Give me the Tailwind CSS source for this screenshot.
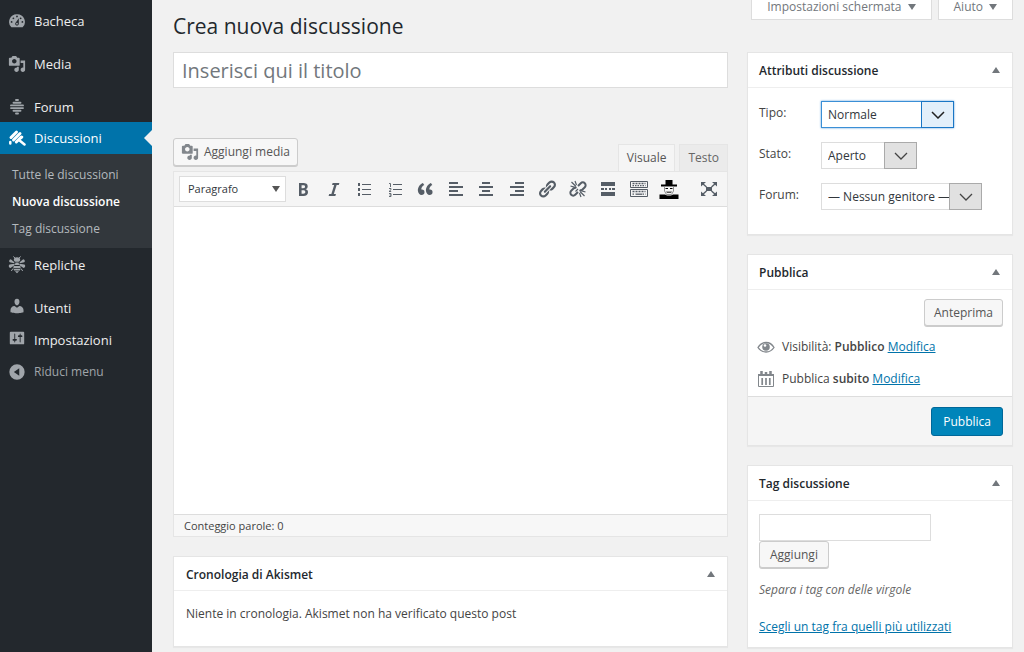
<!DOCTYPE html>
<html lang="it">
<head>
<meta charset="utf-8">
<title>Crea nuova discussione</title>
<script src="https://cdn.jsdelivr.net/npm/@tailwindcss/browser@4"></script>
</head>
<body class="flex min-h-screen bg-[#f1f1f1] font-['Open_Sans','Noto_Sans',sans-serif] text-[12px] leading-5 text-[#444]">

<nav class="w-[152px] shrink-0 bg-[#23282d] pt-[5px] text-[13px] text-[#eee]" aria-label="Menu principale">
  <a href="#" class="flex h-8 items-center gap-2 pl-2">
    <svg class="size-[18px] shrink-0 fill-[#a0a5aa]" viewBox="0 0 20 20"><path fill-rule="evenodd" d="M3.76 17h12.48A8.500 8.500 0 0 0 10 2.500 8.500 8.500 0 0 0 3.760 17zM10 4c.55 0 1 .45 1 1s-.45 1-1 1-1-.45-1-1 .45-1 1-1zM6 6c.55 0 1 .45 1 1s-.45 1-1 1-1-.45-1-1 .45-1 1-1zm8 0c.55 0 1 .45 1 1s-.45 1-1 1-1-.45-1-1 .45-1 1-1zm-5.370 5.550L12 7v6c0 1.100-.9 2-2 2s-2-.9-2-2c0-.57.24-1.080.63-1.450zM4 10c.55 0 1 .45 1 1s-.45 1-1 1-1-.45-1-1 .45-1 1-1zm12 0c.55 0 1 .45 1 1s-.45 1-1 1-1-.45-1-1 .45-1 1-1zm-5 3c0-.55-.45-1-1-1s-1 .45-1 1 .45 1 1 1 1-.45 1-1z"/></svg>
    Bacheca</a>
  <a href="#" class="mt-[11px] flex h-8 items-center gap-2 pl-2">
    <svg class="size-[18px] shrink-0 fill-[#a0a5aa]" viewBox="0 0 20 20"><path id="media" fill-rule="evenodd" d="M13 11V4c0-.55-.45-1-1-1h-1.670L9 1H5L3.670 3H2c-.55 0-1 .45-1 1v7c0 .55.45 1 1 1h10c.55 0 1-.45 1-1zM7 4.500c1.380 0 2.500 1.120 2.500 2.500S8.380 9.500 7 9.500 4.500 8.380 4.500 7 5.620 4.500 7 4.500zM14 6h5v10.500c0 1.380-1.120 2.500-2.500 2.500S14 17.880 14 16.500s1.120-2.500 2.500-2.500c.17 0 .34.02.5.05V9h-3V6zm-4 8.050V13h2v3.500c0 1.380-1.120 2.500-2.500 2.500S7 17.880 7 16.500 8.120 14 9.500 14c.17 0 .34.02.5.05z"/></svg>
    Media</a>
  <a href="#" class="mt-[11px] flex h-8 items-center gap-2 pl-2">
    <svg class="size-[18px] shrink-0 stroke-[#a0a5aa]" viewBox="0 0 18 18" fill="none" stroke-width="1.900" stroke-linecap="round"><path d="M8 2h2M5.500 4.700h7M3 7.400h12M3 10.100h12M5.500 12.800h7M8 15.500h2"/></svg>
    Forum</a>
  <a href="#" class="relative -mt-px flex h-8 items-center gap-2 bg-[#0073aa] pl-2 text-white">
    <svg class="size-[18px] shrink-0" viewBox="0 0 18 18" fill="none" stroke="#fff" stroke-linecap="round"><path stroke-width="3" d="M3 8.500L8.500 3M5.500 11l6.500-6.500M8.300 13l5-5"/><path stroke-width="2.500" d="M11 11l5.500 4.500M2.300 13v1.500M13 9l1-1"/></svg>
    Discussioni
    <span class="absolute right-0 top-2 border-y-8 border-r-8 border-y-transparent border-r-[#f1f1f1]"></span></a>
  <div class="flex flex-col bg-[#32373c] pb-[6px] pl-3 pt-[7px] text-[12px] leading-[27px] text-[#b4b9be]">
    <a href="#">Tutte le discussioni</a>
    <a href="#" class="font-semibold text-white">Nuova discussione</a>
    <a href="#">Tag discussione</a>
  </div>
  <a href="#" class="mt-px flex h-8 items-center gap-2 pl-2">
    <svg class="size-[18px] shrink-0 fill-[#a0a5aa]" viewBox="0 0 18 18"><path d="M5.800 3.600C6 2 7.200 1.300 9 1.300s3 .7 3.200 2.300c0 1.200-.8 1.900-1.500 2.200H7.300c-.7-.3-1.500-1-1.500-2.200zM6.400 6.200L2.800 3.200C.9 3.300.8 5.800 1.800 6.300l4.300 1zM11.600 6.200l3.600-3c1.900.1 2 2.600 1 3.100l-4.300 1zM6.800 7.700L1.500 8.600C.2 9.500.8 12 2.500 12l4-2.800zM11.200 7.700l5.300.9c1.300.9.7 3.400-1 3.400l-4-2.800zM7.500 6.500h3l.7 2.600H6.800zM5.700 10h6.600l.4 1.900H5.300zM5.400 12.800h7.200l-.7 1.700H6.100zM6.900 15.300h4.200L9 17.300z"/><path d="M7 2L5.300.5M11 2L12.700.5M5 12.500L3.300 15M13 12.500l1.700 2.500" stroke="#a0a5aa"/></svg>
    Repliche</a>
  <a href="#" class="mt-[11px] flex h-8 items-center gap-2 pl-2">
    <svg class="mb-1 size-[18px] shrink-0 fill-[#a0a5aa]" viewBox="0 0 20 20"><path d="M10 9.250c-2.270 0-2.730-3.440-2.730-3.440C7 4.020 7.820 2 9.970 2c2.160 0 2.980 2.020 2.710 3.810 0 0-.41 3.440-2.680 3.440zm0 2.570L12.720 10c2.390 0 4.520 2.330 4.520 4.530v2.490s-3.650 1.130-7.240 1.130c-3.650 0-7.240-1.130-7.240-1.130v-2.490c0-2.250 1.940-4.480 4.470-4.480z"/></svg>
    Utenti</a>
  <a href="#" class="flex h-8 items-center gap-2 pl-2">
    <svg class="mb-1 size-[18px] shrink-0 fill-[#a0a5aa]" viewBox="0 0 20 20"><path fill-rule="evenodd" d="M18 16V4c0-.55-.45-1-1-1H3c-.55 0-1 .45-1 1v12c0 .55.45 1 1 1h14c.55 0 1-.45 1-1zM8 11h1c.55 0 1 .45 1 1s-.45 1-1 1H8v1.500c0 .28-.22.5-.5.5s-.5-.22-.5-.5V13H6c-.55 0-1-.45-1-1s.45-1 1-1h1V5.500c0-.28.22-.5.5-.5s.5.22.5.5V11zm5-2h-1c-.55 0-1-.45-1-1s.45-1 1-1h1V5.500c0-.28.22-.5.5-.5s.5.22.5.5V7h1c.55 0 1 .45 1 1s-.45 1-1 1h-1v5.500c0 .28-.22.5-.5.5s-.5-.22-.5-.5V9z"/></svg>
    Impostazioni</a>
  <button type="button" class="flex h-8 w-full items-center gap-2 pl-2 text-[12px] text-[#a0a5aa]">
    <svg class="size-[18px] shrink-0 fill-[#a0a5aa]" viewBox="0 0 20 20"><path fill-rule="evenodd" d="M10 1.500a8.500 8.500 0 1 0 0 17 8.500 8.500 0 0 0 0-17zM12.500 5.800v8.400L6.500 10z"/></svg>
    Riduci menu</button>
</nav>

<div class="flex min-w-0 flex-1 gap-[19px] pl-[21px] pr-[11px]">
  <main class="flex min-w-0 flex-1 flex-col pt-[10px]">
    <h1 class="text-[21px] leading-8 text-[#23282d]">Crea nuova discussione</h1>
    <input type="text" aria-label="Titolo" placeholder="Inserisci qui il titolo" class="mt-[10px] h-9 w-full border border-[#ddd] bg-white px-2 pt-px text-[20px] placeholder:text-[#72777c]">

    <div class="mt-[50px] flex items-start justify-between">
      <button type="button" class="flex h-7 items-center gap-1 rounded-[3px] border border-[#ccc] bg-[#f7f7f7] px-[7px] text-[#555] shadow-[0_1px_0_#ccc]">
        <svg class="size-[18px] fill-[#82878c]" viewBox="0 0 20 20"><use href="#media"/></svg>
        <span class="pl-px">Aggiungi media</span></button>
      <div class="mt-[6px] flex gap-1 text-[#555]">
        <button type="button" class="h-[27px] border border-b-0 border-[#e5e5e5] bg-[#f5f5f5] px-2">Visuale</button>
        <button type="button" class="h-[27px] border border-b-0 border-[#e5e5e5] bg-[#ebebeb] px-2 text-[#666]">Testo</button>
      </div>
    </div>

    <section class="flex flex-col border border-[#e5e5e5] bg-white" aria-label="Editor">
      <div class="flex h-[35px] items-center border-b border-[#ddd] bg-[#f5f5f5] pl-[5px] pr-2 text-[#555d66]">
        <button type="button" class="flex h-[26px] w-[107px] items-center justify-between border border-[#ddd] bg-white pl-2 pr-[5px] text-[11px] text-[#32373c]">Paragrafo
          <svg class="h-[6px] w-2 fill-[#555]" viewBox="0 0 8 6"><path d="M0 0h8L4 6z"/></svg></button>
        <div class="ml-[7px] flex flex-1 items-center justify-between pb-px">
          <button type="button" aria-label="Grassetto"><svg class="size-5" viewBox="0 0 20 20" fill="currentColor"><path fill-rule="evenodd" d="M6 4v13h4.540c1.370 0 2.460-.33 3.260-1 .8-.66 1.200-1.580 1.200-2.770 0-.84-.17-1.510-.51-2.010s-.9-.85-1.670-1.030v-.09c.57-.1 1.020-.4 1.360-.9s.51-1.130.51-1.910c0-1.140-.39-1.980-1.170-2.500C12.750 4.260 11.500 4 9.780 4H6zm2.570 5.150V6.260h1.360c.73 0 1.270.11 1.610.32.34.22.51.58.51 1.070 0 .54-.16.92-.47 1.150s-.82.35-1.510.35h-1.500zm0 2.190h1.600c1.440 0 2.160.53 2.160 1.610 0 .6-.17 1.050-.51 1.340s-.86.43-1.570.43H8.570v-3.380z"/></svg></button>
          <button type="button" aria-label="Corsivo"><svg class="size-5" viewBox="0 0 20 20" fill="currentColor"><path d="M14.780 6h-2.130l-2.800 9h2.120l-.62 2H4.600l.62-2h2.140l2.800-9H8.030l.62-2h6.750z"/></svg></button>
          <button type="button" aria-label="Elenco puntato"><svg class="size-5" viewBox="0 0 20 20" fill="currentColor"><path d="M4 4h2v3H4zM4 9h2v3H4zM4 14h2v3H4zM8 5h9v1H8zM8 10h9v1H8zM8 15h9v1H8z"/></svg></button>
          <button type="button" aria-label="Elenco numerato"><svg class="size-5" viewBox="0 0 20 20" fill="currentColor"><path d="M8 5h9v1H8zM8 10h9v1H8zM8 15h9v1H8z"/><path fill="none" stroke="currentColor" stroke-width=".9" d="M4 4.500h1.500V8M4 9.500h2v1.200L4 12.500h2.200M4 14.500h2v3H4M4.500 16H6"/></svg></button>
          <button type="button" aria-label="Citazione"><svg class="size-5" viewBox="0 0 20 20" fill="currentColor"><path d="M9.490 13.220c0-.74-.2-1.380-.61-1.900-.62-.78-1.830-.88-2.530-.72-.29-1.650 1.110-3.750 2.920-4.650L7.880 4c-2.730 1.300-5.420 4.280-4.960 8.050C3.210 14.430 4.590 16 6.540 16c.85 0 1.560-.25 2.120-.75s.83-1.180.83-2.030zm8.050 0c0-.74-.2-1.380-.61-1.900-.63-.78-1.830-.88-2.530-.72-.29-1.650 1.110-3.750 2.920-4.650L15.930 4c-2.730 1.300-5.410 4.280-4.950 8.050.29 2.380 1.660 3.950 3.610 3.950.85 0 1.560-.25 2.120-.75s.83-1.180.83-2.030z"/></svg></button>
          <button type="button" aria-label="Allinea a sinistra"><svg class="size-5" viewBox="0 0 20 20" fill="currentColor"><path d="M3 3h9v2H3zM3 7h14v2H3zM3 11h9v2H3zM3 15h14v2H3z"/></svg></button>
          <button type="button" aria-label="Allinea al centro"><svg class="size-5" viewBox="0 0 20 20" fill="currentColor"><path d="M6 3h8v2H6zM3 7h14v2H3zM6 11h8v2H6zM3 15h14v2H3z"/></svg></button>
          <button type="button" aria-label="Allinea a destra"><svg class="size-5" viewBox="0 0 20 20" fill="currentColor"><path d="M8 3h9v2H8zM3 7h14v2H3zM8 11h9v2H8zM3 15h14v2H3z"/></svg></button>
          <button type="button" aria-label="Inserisci link"><svg class="size-5" viewBox="0 0 20 20" fill="currentColor"><path d="M17.740 2.760c1.680 1.690 1.680 4.410 0 6.100l-1.530 1.520c-1.120 1.120-2.700 1.470-4.140 1.090l2.620-2.610.76-.77.76-.76c.84-.84.84-2.200 0-3.040-.84-.85-2.200-.85-3.040 0l-.77.76-3.380 3.380c-.37-1.440-.02-3.020 1.100-4.140l1.520-1.530c1.690-1.680 4.420-1.680 6.100 0zM8.590 13.430l5.340-5.340c.42-.42.42-1.100 0-1.520-.44-.43-1.130-.39-1.530 0l-5.330 5.340c-.42.42-.42 1.100 0 1.520.44.43 1.130.39 1.520 0zm-.76 2.290l4.140-4.150c.38 1.440.03 3.020-1.090 4.140l-1.520 1.530c-1.690 1.680-4.410 1.680-6.100 0-1.680-1.680-1.680-4.420 0-6.100l1.530-1.520c1.120-1.120 2.700-1.470 4.140-1.100l-4.140 4.150c-.85.84-.85 2.200 0 3.050.84.84 2.200.84 3.040 0z"/></svg></button>
          <button type="button" aria-label="Rimuovi link"><svg class="size-5" viewBox="0 0 20 20" fill="none" stroke="currentColor"><path stroke-width="2" d="M10 7l2.800-2.800a2.800 2.800 0 0 1 4 4L14.500 10.500a2.800 2.800 0 0 1-3 .6M10 13l-2.800 2.800a2.800 2.800 0 0 1-4-4L5.500 9.500a2.800 2.800 0 0 1 3-.6"/><path stroke-width="1.200" d="M8 7.500L3.500 3M8.500 6L7 2M7 8.300L2.500 7M12 12.500l4.500 4.500M11.500 14l1.500 4M13 11.700l4.500 1.300M7.500 12.500L10 10"/></svg></button>
          <button type="button" aria-label="Inserisci tag Leggi tutto"><svg class="size-5" viewBox="0 0 20 20" fill="currentColor"><path d="M3 3h14v4H3zM3 9h3v2H3zM7 9h2v2H7zM11 9h2v2h-2zM14 9h3v2h-3zM3 13h14v4H3z"/></svg></button>
          <button type="button" aria-label="Barra degli strumenti"><svg class="size-5" viewBox="0 0 20 20" fill="none" stroke="currentColor"><path d="M1.500 2.500h17v6h-17zM1.500 10.500h17v7h-17z"/><path stroke-dasharray="2 1" stroke-width="1.500" d="M3.500 4.500h13M3.500 12.500h13"/><path stroke-dasharray="1.500 1" stroke-width="1.300" d="M3.500 6.700h13M3.500 15.200h3M13.500 15.200h3"/><path stroke-width="1.300" d="M7 15.200h6"/></svg></button>
          <button type="button" aria-label="Anonimo"><svg class="size-5" viewBox="0 0 20 20"><path fill="#000" d="M6.500 1h7v4.500H18v2H2v-2h4.500z"/><path fill="#f5f5f5" stroke="#777" stroke-width=".8" d="M5.500 7.500h9v4.500L12.500 15.500H7.500L5.500 12z"/><path stroke="#000" d="M6.500 9.500h2.500M11 9.500h2.500" fill="none"/><path fill="#555" d="M7 12.500h6l-1 1.500H8z"/><path fill="#000" d="M.5 20v-4.500h5.500l2 1h4l2-1h5.500V20z"/></svg></button>
        </div>
        <button type="button" class="ml-5 pb-px" aria-label="Schermo intero"><svg class="size-5" viewBox="0 0 20 20" fill="currentColor"><path d="M7 8h6v4H7zM2 3h5L2 7.500zM18 3h-5l5 4.500zM2 17h5l-5-4.500zM18 17h-5l5-4.500z"/><path fill="none" stroke="currentColor" stroke-width="1.400" d="M3.500 4.500L7.500 8M16.500 4.500L12.500 8M3.500 15.500L7.500 12M16.500 15.500L12.500 12"/></svg></button>
      </div>
      <textarea aria-label="Contenuto" class="block h-[307px] w-full resize-none p-3"></textarea>
      <div class="border-t border-[#ddd] bg-[#f7f7f7] px-[10px] text-[11px] leading-[21px]">Conteggio parole: 0</div>
    </section>

    <section class="mt-[19px] border border-[#e5e5e5] bg-white shadow-[0_1px_1px_rgba(0,0,0,0.04)]">
      <div class="flex h-[34px] items-center justify-between border-b border-[#eee] px-3">
        <h2 class="pt-[2px] font-semibold text-[#23282d]">Cronologia di Akismet</h2>
        <button type="button" aria-label="Comprimi"><svg class="h-[6px] w-2 fill-[#72777c]" viewBox="0 0 8 6"><path d="M0 6h8L4 0z"/></svg></button>
      </div>
      <p class="px-3 pb-[22px] pt-[13px]">Niente in cronologia. Akismet non ha verificato questo post</p>
    </section>
  </main>

  <aside class="w-[266px] shrink-0">
    <div class="flex h-5 justify-end gap-[6px] leading-[13px] text-[#72777c]">
      <button type="button" class="flex h-5 items-center gap-[6px] border border-t-0 border-[#ddd] bg-white pb-[6px] pl-[15px] pr-[15px]">Impostazioni schermata
        <svg class="h-[6px] w-2 fill-current" viewBox="0 0 8 6"><path d="M0 0h8L4 6z"/></svg></button>
      <button type="button" class="flex h-5 items-center gap-[6px] border border-t-0 border-[#ddd] bg-white pb-[6px] pl-[15px] pr-[15px]">Aiuto
        <svg class="h-[6px] w-2 fill-current" viewBox="0 0 8 6"><path d="M0 0h8L4 6z"/></svg></button>
    </div>

    <section class="mt-8 border border-[#e5e5e5] bg-white shadow-[0_1px_1px_rgba(0,0,0,0.04)]">
      <div class="flex h-[35px] items-center justify-between border-b border-[#eee] pl-[11px] pr-3">
        <h2 class="pt-[2px] font-semibold text-[#23282d]">Attributi discussione</h2>
        <button type="button" aria-label="Comprimi"><svg class="h-[6px] w-2 fill-[#72777c]" viewBox="0 0 8 6"><path d="M0 6h8L4 0z"/></svg></button>
      </div>
      <div class="grid grid-cols-[62px_1fr] gap-y-[14px] pb-[24px] pl-[11px] pt-[13px] font-medium">
        <label for="tipo" class="pt-[2px]">Tipo:</label>
        <div class="relative w-[133px]">
          <select id="tipo" class="block h-[27px] w-full appearance-none border border-[#3a8fd6] bg-white pl-[6px] pr-8 font-normal text-[#32373c] shadow-[0_0_2px_#5b9dd9]"><option>Normale</option></select>
          <span class="pointer-events-none absolute inset-y-0 right-0 flex w-[33px] items-center justify-center border border-[#1976c5] bg-[#e2effa]"><svg class="h-2 w-[14px]" viewBox="0 0 14 8" fill="none" stroke="#222" stroke-width="1.500"><path d="M1 1l6 6 6-6"/></svg></span>
        </div>
        <label for="stato" class="pt-[2px]">Stato:</label>
        <div class="relative w-24">
          <select id="stato" class="block h-[27px] w-full appearance-none border border-[#ddd] bg-white pl-[6px] pr-8 font-normal text-[#32373c]"><option>Aperto</option></select>
          <span class="pointer-events-none absolute inset-y-0 right-0 flex w-[33px] items-center justify-center border border-[#aaa] bg-[#e1e1e1]"><svg class="h-2 w-[14px]" viewBox="0 0 14 8" fill="none" stroke="#444" stroke-width="1.300"><path d="M1 1l6 6 6-6"/></svg></span>
        </div>
        <label for="forum" class="pt-[2px]">Forum:</label>
        <div class="relative w-[161px]">
          <select id="forum" class="block h-[27px] w-full appearance-none border border-[#ddd] bg-white pl-[6px] pr-8 font-normal text-[#32373c]"><option>— Nessun genitore —</option></select>
          <span class="pointer-events-none absolute inset-y-0 right-0 flex w-[33px] items-center justify-center border border-[#aaa] bg-[#e1e1e1]"><svg class="h-2 w-[14px]" viewBox="0 0 14 8" fill="none" stroke="#444" stroke-width="1.300"><path d="M1 1l6 6 6-6"/></svg></span>
        </div>
      </div>
    </section>

    <section class="mt-[19px] border border-[#e5e5e5] bg-white shadow-[0_1px_1px_rgba(0,0,0,0.04)]">
      <div class="flex h-[35px] items-center justify-between border-b border-[#eee] pl-[11px] pr-3">
        <h2 class="pt-[2px] font-semibold text-[#23282d]">Pubblica</h2>
        <button type="button" aria-label="Comprimi"><svg class="h-[6px] w-2 fill-[#72777c]" viewBox="0 0 8 6"><path d="M0 6h8L4 0z"/></svg></button>
      </div>
      <div class="flex justify-end pr-[9px] pt-[9px]">
        <button type="button" class="h-[27px] rounded-[3px] border border-[#ccc] bg-[#f7f7f7] px-[9px] text-[#555] shadow-[0_1px_0_#ccc]">Anteprima</button>
      </div>
      <div class="mt-[5px] flex h-8 items-center gap-[7px] pl-[9px]">
        <svg class="size-[18px]" viewBox="0 0 18 18"><path fill="none" stroke="#82878c" stroke-width="1.300" d="M1 9.500C3 6 6 4.500 9 4.500s6 1.500 8 5c-2 3-5 4.500-8 4.500s-6-1.500-8-4.500z"/><circle cx="9" cy="9" r="3.800" fill="#82878c"/><circle cx="8" cy="7.500" r="1.300" fill="#fff"/></svg>
        <span>Visibilità: <b class="font-semibold">Pubblico</b> <a href="#" class="text-[#0073aa] underline">Modifica</a></span>
      </div>
      <div class="flex h-8 items-center gap-[7px] pl-[9px]">
        <svg class="size-[18px]" viewBox="0 0 18 18" fill="none" stroke="#82878c"><path d="M1.500 4.500h15v12h-15z"/><path stroke-width="2" d="M1 5h16"/><path stroke-width="2.500" d="M4.500 1v4M9 2v3M13.500 1v4"/><path stroke-width="1.700" d="M5.200 8v7M9 8v7M12.800 8v7"/></svg>
        <span>Pubblica <b class="font-semibold">subito</b> <a href="#" class="text-[#0073aa] underline">Modifica</a></span>
      </div>
      <div class="mt-px flex justify-end border-t border-[#ddd] bg-[#f5f5f5] pb-[9px] pr-[9px] pt-[10px]">
        <button type="button" class="h-[29px] rounded-[3px] border border-[#006799] bg-[#0085ba] px-[11px] font-medium text-white">Pubblica</button>
      </div>
    </section>

    <section class="mt-[19px] border border-[#e5e5e5] bg-white shadow-[0_1px_1px_rgba(0,0,0,0.04)]">
      <div class="flex h-[35px] items-center justify-between border-b border-[#eee] pl-[11px] pr-3">
        <h2 class="pt-[2px] font-semibold text-[#23282d]">Tag discussione</h2>
        <button type="button" aria-label="Comprimi"><svg class="h-[6px] w-2 fill-[#72777c]" viewBox="0 0 8 6"><path d="M0 6h8L4 0z"/></svg></button>
      </div>
      <div class="flex flex-col items-start pb-[10px] pl-[11px] pt-[13px]">
        <input type="text" aria-label="Aggiungi tag" class="h-[27px] w-[172px] border border-[#ddd] bg-white px-2">
        <button type="button" class="h-[27px] rounded-[3px] border border-[#ccc] bg-[#f7f7f7] px-[10px] text-[#555] shadow-[0_1px_0_#ccc]">Aggiungi</button>
        <p class="mt-3 italic text-[#666]">Separa i tag con delle virgole</p>
        <a href="#" class="mt-[17px] text-[#0073aa] underline">Scegli un tag fra quelli più utilizzati</a>
      </div>
    </section>
  </aside>
</div>
</body>
</html>
